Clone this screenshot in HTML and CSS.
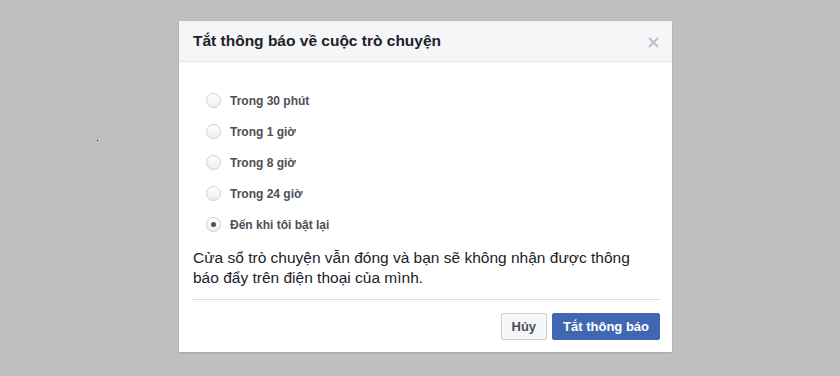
FILE: index.html
```html
<!DOCTYPE html>
<html>
<head>
  <title>Tắt thông báo</title>
  <meta charset="UTF-8">
  <link rel="stylesheet" href="styles.css">
</head>
<body>

<span class="speck"></span>

<div class="dialog">
  <div class="dialog-header">
    <h2 class="dialog-title">Tắt thông báo về cuộc trò chuyện</h2>
    <svg class="close" width="11" height="11" viewBox="0 0 11 11">
      <path d="M1 1 L10 10 M10 1 L1 10" stroke="#bec2c9" stroke-width="2.2" fill="none"/>
    </svg>
  </div>

  <div class="dialog-body">
    <div class="options">
      <label class="option"><span class="radio"></span>Trong 30 phút</label>
      <label class="option"><span class="radio"></span>Trong 1 giờ</label>
      <label class="option"><span class="radio"></span>Trong 8 giờ</label>
      <label class="option"><span class="radio"></span>Trong 24 giờ</label>
      <label class="option"><span class="radio checked"></span>Đến khi tôi bật lại</label>
    </div>
    <p class="note">Cửa sổ trò chuyện vẫn đóng và bạn sẽ không nhận được thông báo đẩy trên điện thoại của mình.</p>
  </div>

  <div class="dialog-footer">
    <button class="btn">Hủy</button>
    <button class="btn btn-primary">Tắt thông báo</button>
  </div>
</div>

</body>
</html>
```

FILE: styles.css
```css
body {
    margin: 0;
    background-color: #bfbfbf;
    font-family: "Liberation Sans", Arial, sans-serif;
    color: #1d2129;
    height: 376px;
    overflow: hidden;
}
.speck {
    position: absolute;
    left: 97px;
    top: 140px;
    width: 1px;
    height: 1px;
    background-color: #222;
}
.dialog {
    width: 493px;
    margin: 21px 0 0 179px;
    background-color: #fff;
    box-shadow: 0 1px 2px rgba(0, 0, 0, 0.15);
}
.dialog-header {
    height: 40px;
    display: flex;
    align-items: center;
    justify-content: space-between;
    padding: 0 13px 0 14px;
    background-color: #f5f6f7;
    border-bottom: 1px solid #e5e5e5;
}
.dialog-title {
    margin: 0;
    font-size: 15.5px;
    font-weight: bold;
    color: #1d2129;
}
.close {
    display: block;
    margin-top: 3px;
}
.dialog-body {
    padding: 23px 12px 0 14px;
}
.options {
    display: flex;
    flex-direction: column;
}
.option {
    height: 31px;
    display: flex;
    align-items: center;
    padding-left: 13px;
    font-size: 12px;
    font-weight: bold;
    color: #4b4f56;
}
.radio {
    width: 13px;
    height: 13px;
    border: 1px solid #ccd0d5;
    border-radius: 50%;
    background: linear-gradient(#fff, #eceef1);
    margin-right: 9px;
    display: flex;
    align-items: center;
    justify-content: center;
}
.radio.checked::after {
    content: "";
    width: 5px;
    height: 5px;
    border-radius: 50%;
    background-color: #4b4f56;
}
.note {
    margin: 8px 0 0;
    padding-right: 20px;
    font-size: 15.5px;
    line-height: 20px;
    color: #1d2129;
}
.dialog-footer {
    margin: 11px 12px 0 13px;
    padding: 13px 0 12px;
    border-top: 1px solid #dddfe2;
    display: flex;
    justify-content: flex-end;
    gap: 5px;
}
.btn {
    height: 27px;
    padding: 0 10px;
    font-family: "Liberation Sans", Arial, sans-serif;
    font-size: 13px;
    font-weight: bold;
    color: #4b4f56;
    background-color: #f5f6f7;
    border: 1px solid #ccd0d5;
    border-radius: 2px;
}
.btn-primary {
    color: #fff;
    background-color: #4267b2;
    border-color: #4267b2;
}
```
